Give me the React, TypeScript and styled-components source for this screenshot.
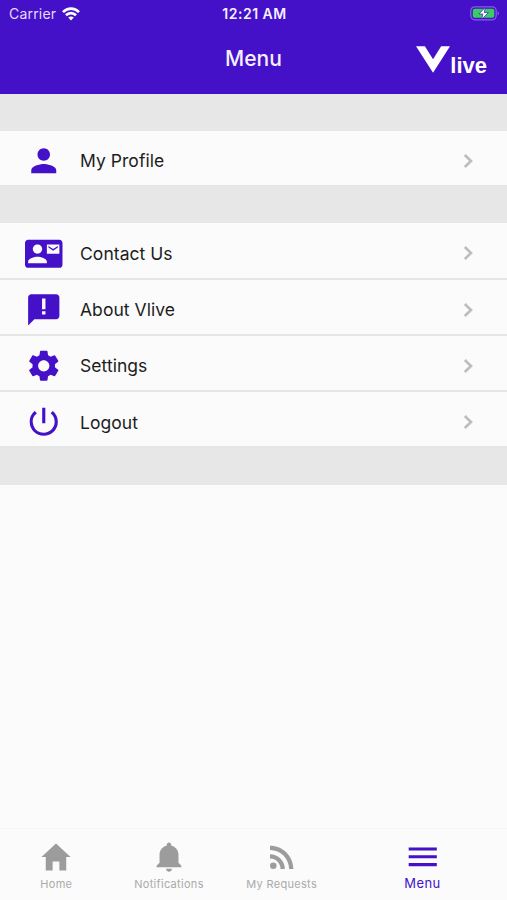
import React from "react";
import styled, { createGlobalStyle } from "styled-components";
import { IoMdHome, IoMdNotifications } from "react-icons/io";
import {
  MdPerson,
  MdContactMail,
  MdSettings,
  MdPowerSettingsNew,
  MdRssFeed,
  MdMenu,
} from "react-icons/md";

const purple = "#4411c9";

const GlobalStyle = createGlobalStyle`
  *, *::before, *::after { box-sizing: border-box; }
  body { margin: 0; background: #fbfbfb; font-family: Inter, sans-serif; }
`;

const Screen = styled.div`
  width: 100%;
  height: 100vh;
  min-height: 900px;
  display: flex;
  flex-direction: column;
  background: #fbfbfb;
`;

const Header = styled.header`
  height: 94px;
  flex: none;
  background: ${purple};
  color: #f6efff;
`;

const StatusBar = styled.div`
  height: 27px;
  display: grid;
  grid-template-columns: 1fr auto 1fr;
  align-items: center;
  padding: 0 7px 0 9px;
  font-size: 14px;
`;

const Carrier = styled.div`
  display: flex;
  align-items: center;
  gap: 6px;
  letter-spacing: 0.2px;
  color: #e6dcfa;
`;

const Clock = styled.div`
  font-size: 14px;
  font-weight: 600;
  letter-spacing: 0.5px;
`;

const BatteryIcon = styled.svg`
  justify-self: end;
`;

const TitleBar = styled.div`
  height: 62px;
  display: grid;
  grid-template-columns: 1fr auto 1fr;
  align-items: center;
  padding: 0 20px;
`;

const Title = styled.h1`
  grid-column: 2;
  margin: 0;
  font-size: 21px;
  font-weight: 500;
  letter-spacing: 0.1px;
`;

const Logo = styled.div`
  justify-self: end;
  display: flex;
  align-items: flex-end;
  padding-top: 3px;
  color: #fff;
`;

const LogoWord = styled.span`
  font-family: "Liberation Sans", sans-serif;
  font-weight: 700;
  font-size: 22px;
  line-height: 15px;
`;

const Spacer = styled.div<{ $height: number }>`
  flex: none;
  height: ${(p) => p.$height}px;
  background: #e7e7e7;
`;

const Row = styled.button`
  flex: none;
  height: 56.2px;
  display: grid;
  grid-template-columns: 38px 1fr 28px;
  align-items: center;
  column-gap: 17px;
  padding: 6px 25px 0;
  border: 0;
  border-bottom: 2px solid #e5e5e5;
  background: #fbfbfb;
  color: #1d1d1d;
  font: 400 17.5px Inter, sans-serif;
  letter-spacing: 0.05px;
  text-align: left;
`;

const RowIcon = styled.span`
  display: flex;
  color: ${purple};
`;

const RowChevron = styled.span`
  display: flex;
  color: #bdbdbd;
`;

const TabBar = styled.nav`
  margin-top: auto;
  height: 72px;
  display: grid;
  grid-template-columns: 2fr 2fr 2fr 3fr;
  border-top: 1px solid #f6f6f6;
`;

const Tab = styled.a<{ $active?: boolean }>`
  display: flex;
  flex-direction: column;
  align-items: center;
  padding-top: ${(p) => (p.$active ? 9 : 10)}px;
  color: ${(p) => (p.$active ? purple : "#9c9c9c")};
`;

const TabLabel = styled.span<{ $active?: boolean }>`
  margin-top: ${(p) => (p.$active ? -1 : 1)}px;
  font-size: ${(p) => (p.$active ? 13 : 11)}px;
  line-height: 16px;
  letter-spacing: ${(p) => (p.$active ? 0.4 : 0.3)}px;
  color: ${(p) => (p.$active ? purple : "#aaaaaa")};
`;

const Feedback = () => (
  <svg width="37.5" height="37.5" viewBox="0 0 24 24" fill="currentColor" fillRule="evenodd">
    <path d="M20 2H4c-1.100 0-2 .9-2 2v18l4-4h14c1.100 0 2-.9 2-2V4c0-1.100-.9-2-2-2zM10.900 4.800h2.200v6.800h-2.200zM10.900 13h2.200v2h-2.200z" />
  </svg>
);

const Chevron = () => (
  <svg width="28" height="28" viewBox="0 0 28 28" fill="none" stroke="currentColor" strokeWidth="2.600">
    <path d="M10.800 8L17 14L10.800 20" />
  </svg>
);

const MenuRow = ({ icon, label }: { icon: React.ReactNode; label: string }) => (
  <Row>
    <RowIcon>{icon}</RowIcon>
    <span>{label}</span>
    <RowChevron><Chevron /></RowChevron>
  </Row>
);

const Wifi = () => (
  <svg width="18" height="14" viewBox="0 0 18 14" fill="none" stroke="#fff" strokeWidth="2.7">
    <path d="M1 5.100C5.500.5 12.500.5 17 5.100" />
    <path d="M4 8.300C6.800 5.400 11.200 5.400 14 8.300" />
    <path d="M6.200 10.600C7.800 9 10.200 9 11.800 10.600L9 13.500Z" fill="#fff" stroke="none" />
  </svg>
);

const Battery = () => (
  <BatteryIcon width="30" height="15" viewBox="0 0 30 15">
    <rect x="0.8" y="0.8" width="25.400" height="13" rx="4" fill="none" stroke="#8261df" strokeWidth="1.200" />
    <rect x="2.800" y="2.800" width="21.500" height="9" rx="2" fill="#39ce63" />
    <path d="M27.600 5.200C29.500 6.100 29.500 8.500 27.600 9.400Z" fill="#8261df" />
    <path d="M15.300 1.500L8.800 8H12.800L11.800 13.200L18.400 6.600H14.300Z" fill="#fff" stroke={purple} strokeWidth="0.700" />
  </BatteryIcon>
);

export default function App() {
  return (
    <>
      <GlobalStyle />
      <Screen>
        <Header>
          <StatusBar>
            <Carrier>Carrier <Wifi /></Carrier>
            <Clock>12:21 AM</Clock>
            <Battery />
          </StatusBar>
          <TitleBar>
            <Title>Menu</Title>
            <Logo>
              <svg width="34.500" height="27" viewBox="0 0 35 27" fill="#fff">
                <path d="M0 0H9L17.300 13.300L25.500 0H34.500L17.300 27Z" />
              </svg>
              <LogoWord>live</LogoWord>
            </Logo>
          </TitleBar>
        </Header>
        <Spacer $height={36.5} />
        <MenuRow icon={<MdPerson size={37.5} />} label="My Profile" />
        <Spacer $height={36.7} />
        <MenuRow icon={<MdContactMail size={37.5} />} label="Contact Us" />
        <MenuRow icon={<Feedback />} label="About Vlive" />
        <MenuRow icon={<MdSettings size={37.5} />} label="Settings" />
        <MenuRow icon={<MdPowerSettingsNew size={37.5} />} label="Logout" />
        <Spacer $height={36.6} />
        <TabBar>
          <Tab><IoMdHome size={36} /><TabLabel>Home</TabLabel></Tab>
          <Tab><IoMdNotifications size={36} /><TabLabel>Notifications</TabLabel></Tab>
          <Tab><MdRssFeed size={36} /><TabLabel>My Requests</TabLabel></Tab>
          <Tab $active><MdMenu size={37.5} /><TabLabel $active>Menu</TabLabel></Tab>
        </TabBar>
      </Screen>
    </>
  );
}
